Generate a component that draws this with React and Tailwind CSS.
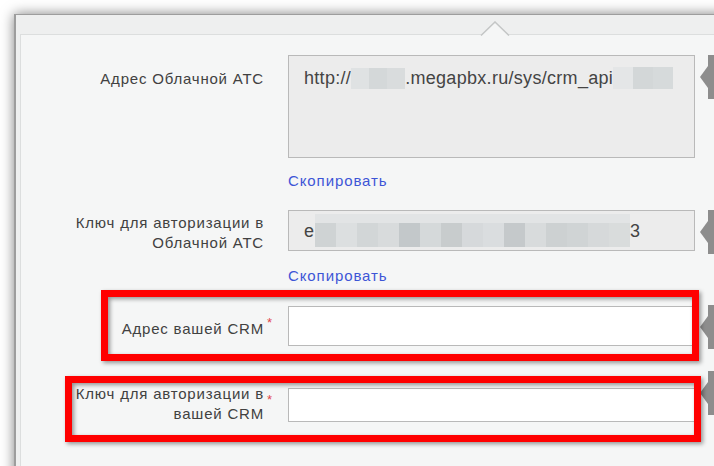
const mosaicRow1a = ["bg-[#dfe2e3]", "bg-[#d4d8d9]", "bg-[#d9dcdd]"];
const mosaicRow1b = ["bg-[#e4e6e7]", "bg-[#d3d7d8]", "bg-[#d6dadb]"];
const mosaicKey = [
  "bg-[#cfd3d4]", "bg-[#dcdfe0]", "bg-[#d2d6d7]", "bg-[#d8dbdc]", "bg-[#c3c8ca]",
  "bg-[#d5d9da]", "bg-[#c8cccd]", "bg-[#d6d9db]", "bg-[#dadddf]", "bg-[#c5c9cb]",
  "bg-[#d8dbdc]", "bg-[#cdd1d2]", "bg-[#d0d4d5]", "bg-[#d6d9da]", "bg-[#d9dcdc]",
];

// hidden part of a value, drawn as a coarse mosaic
function Masked({ cells, cellW, h }) {
  return (
    <span className="inline-flex align-middle">
      {cells.map((c, i) => (
        <span key={i} className={c} style={{ width: cellW, height: h }} />
      ))}
    </span>
  );
}

function Handle({ className = "" }) {
  return (
    <svg width="16" height="44" viewBox="0 0 16 44" className={"shrink-0 " + className}>
      <rect x="8" y="0" width="8" height="44" fill="#8d8d8d" />
      <polygon points="0,22 8,11 8,33" fill="#8d8d8d" />
    </svg>
  );
}

function Label({ children, className = "" }) {
  return (
    <div className={"w-[243px] shrink-0 text-right text-[15px] leading-[20px] tracking-[0.8px] text-[#414141] " + className}>
      {children}
    </div>
  );
}

function CopyLink({ className = "" }) {
  return (
    <div className={"ml-[267px] text-[15px] leading-[16px] tracking-[0.9px] text-[#3d55d6] " + className}>
      Скопировать
    </div>
  );
}

export default function App() {
  return (
    <div className="relative h-[466px] w-[714px] overflow-hidden bg-white font-['Liberation_Sans',Arial,sans-serif]">
      <div className="ml-[14px] mt-[14px] h-[480px] w-[720px] border-l-2 border-t border-[#9d9d9d] bg-[#eeefef] pl-[4px] pt-[19px] shadow-[0_0_12px_rgba(0,0,0,0.5)]">
        <div className="relative h-full border-l border-t border-[#dcdede] bg-[#f5f6f6] pt-[20px]">
          {/* pointer notch on the top edge */}
          <svg width="30" height="15" viewBox="0 0 30 15" className="absolute left-[459px] top-[-14px]">
            <polygon points="1,14.5 15,1 29,14.5" fill="#f5f6f6" />
            <polyline points="1,14.5 15,1 29,14.5" fill="none" stroke="#c4c6c6" strokeWidth="1.5" />
          </svg>

          {/* cloud PBX address */}
          <div className="flex items-start">
            <Label className="pt-[14px]">Адрес Облачной АТС</Label>
            <div className="w-[24px] shrink-0" />
            <div className="h-[103px] w-[407px] shrink-0 border border-[#b9b9b9] bg-[#ececec] pl-[15px] pt-[11px]">
              <div className="flex items-center whitespace-nowrap text-[18px] leading-[22px] tracking-[0.3px] text-[#444]">
                <span>http://</span>
                <Masked cells={mosaicRow1a} cellW={18} h={21} />
                <span>.megapbx.ru/sys/crm_api</span>
                <Masked cells={mosaicRow1b} cellW={20} h={22} />
              </div>
            </div>
            <Handle className="ml-[5px]" />
          </div>
          <CopyLink className="mt-[15px]" />

          {/* cloud PBX key */}
          <div className="mt-[21px] flex items-start">
            <Label className="pt-[3px]">
              Ключ для авторизации в<br />Облачной АТС
            </Label>
            <div className="w-[24px] shrink-0" />
            <div className="flex h-[41px] w-[407px] shrink-0 items-center border border-[#b9b9b9] bg-[#ececec] pl-[15px]">
              <div className="flex items-center whitespace-nowrap text-[18px] leading-[22px] text-[#444]">
                <span>e</span>
                <span className="ml-[1px] flex flex-col">
                  <span className="h-[9px] w-[315px] bg-[#e2e4e5]" />
                  <Masked cells={mosaicKey} cellW={21} h={24} />
                </span>
                <span>3</span>
              </div>
            </div>
            <Handle className="ml-[5px]" />
          </div>
          <CopyLink className="mt-[14px]" />

          {/* CRM address */}
          <div className="relative mt-[22px] flex items-start">
            <Label className="pt-[13px]">Адрес вашей CRM</Label>
            <div className="relative w-[24px] shrink-0">
              <span className="absolute left-[3px] top-[10px] text-[13px] leading-[13px] text-[#e2474c]">*</span>
            </div>
            <div className="h-[40px] w-[407px] shrink-0 border border-[#b9b9b9] bg-white" />
            <Handle className="ml-[5px] -mt-[1px]" />
            <div className="pointer-events-none absolute left-[80px] top-[-16px] h-[71px] w-[598px] border-[7px] border-[#ff0000] drop-shadow-[2px_2px_2px_rgba(0,0,0,0.4)]" />
          </div>

          {/* CRM key */}
          <div className="relative mt-[35px] flex items-start">
            <Label>
              Ключ для авторизации в<br />вашей CRM
            </Label>
            <div className="relative w-[24px] shrink-0">
              <span className="absolute left-[3px] top-[9px] text-[13px] leading-[13px] text-[#e2474c]">*</span>
            </div>
            <div className="mt-[4px] h-[34px] w-[407px] shrink-0 border border-[#b9b9b9] bg-white" />
            <Handle className="ml-[5px] -mt-[13px]" />
            <div className="pointer-events-none absolute left-[44px] top-[-8px] h-[66px] w-[636px] border-[7px] border-[#ff0000] drop-shadow-[2px_2px_2px_rgba(0,0,0,0.4)]" />
          </div>
        </div>
      </div>
    </div>
  );
}
